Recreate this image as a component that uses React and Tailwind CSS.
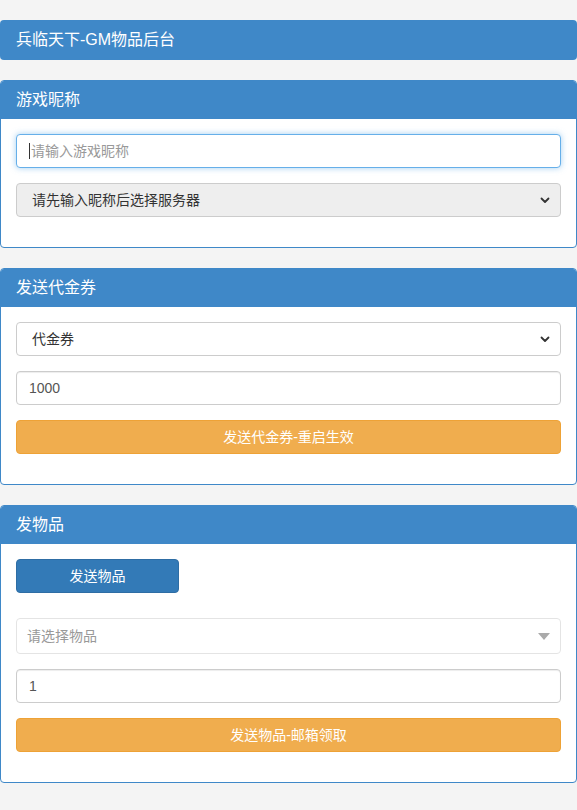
import React from 'react';

const font = { fontFamily: '"Liberation Sans", "Noto Sans CJK SC", sans-serif' };

const Panel = ({ title, children }) => (
  <div className="mb-[20px] border border-[#3f88c8] rounded bg-white overflow-hidden">
    <div className="h-[38px] bg-[#3f88c8] text-white text-[16px] leading-[38px] px-[15px]">{title}</div>
    <div className="px-[15px] pt-[15px] pb-[15px]">{children}</div>
  </div>
);

const Chevron = () => (
  <svg className="w-[10px] h-[10px]" viewBox="0 0 10 10" fill="none">
    <path d="M1.5 3.5 L5 7 L8.5 3.5" stroke="#333" strokeWidth="1.8" strokeLinecap="round" strokeLinejoin="round" />
  </svg>
);

const SelectBox = ({ text, disabled }) => (
  <div className={`h-[34px] mb-[15px] rounded border border-[#ccc] flex items-center justify-between pl-[15px] pr-[10px] text-[14px] text-[#333] ${disabled ? 'bg-[#eee]' : 'bg-white'}`}>
    <span>{text}</span>
    <Chevron />
  </div>
);

const InputBox = ({ value, placeholder, focused }) => (
  <div
    className={`h-[34px] mb-[15px] rounded border flex items-center px-[12px] text-[14px] bg-white ${
      focused
        ? 'border-[#66afe9] shadow-[0_0_6px_rgba(102,175,233,0.6)]'
        : 'border-[#ccc] shadow-[inset_0_1px_1px_rgba(0,0,0,0.075)]'
    }`}
  >
    {focused && <span className="w-px h-[16px] bg-[#333] mr-px" />}
    {value ? <span className="text-[#555]">{value}</span> : <span className="text-[#999]">{placeholder}</span>}
  </div>
);

const OrangeButton = ({ children }) => (
  <div className="h-[34px] mb-[15px] rounded bg-[#f0ad4e] border border-[#eea236] flex items-center justify-center text-white text-[14px]">
    {children}
  </div>
);

export default function App() {
  return (
    <div className="min-h-[810px] bg-[#f4f4f4] pt-[20px]" style={font}>
      <div className="mb-[20px] h-[40px] rounded bg-[#3f88c8] text-white text-[16px] leading-[40px] px-[16px]">
        兵临天下-GM物品后台
      </div>

      <Panel title="游戏昵称">
        <InputBox placeholder="请输入游戏昵称" focused />
        <SelectBox text="请先输入昵称后选择服务器" disabled />
      </Panel>

      <Panel title="发送代金券">
        <SelectBox text="代金券" />
        <InputBox value="1000" />
        <OrangeButton>发送代金券-重启生效</OrangeButton>
      </Panel>

      <Panel title="发物品">
        <div className="w-[163px] h-[34px] rounded bg-[#337ab7] border border-[#2e6da4] flex items-center justify-center text-white text-[14px] mb-[25px]">
          发送物品
        </div>
        <div className="h-[36px] mb-[15px] rounded-sm border border-[#e4e4e4] bg-white flex items-center justify-between pl-[10px] pr-[10px] text-[14px] text-[#999]">
          <span>请选择物品</span>
          <svg className="w-[12px] h-[7px]" viewBox="0 0 12 7">
            <path d="M0 0 L12 0 L6 7 Z" fill="#aaa" />
          </svg>
        </div>
        <InputBox value="1" />
        <OrangeButton>发送物品-邮箱领取</OrangeButton>
      </Panel>
    </div>
  );
}
